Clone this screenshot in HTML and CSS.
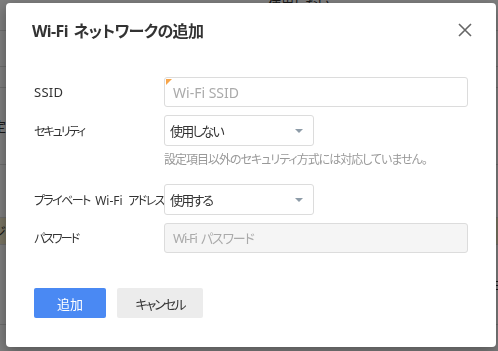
FILE: index.html
```html
<!DOCTYPE html>
<html lang="ja">
    <head>
        <meta charset="UTF-8">
        <title>Wi-Fi ネットワークの追加</title>
        <link rel="stylesheet" href="styles.css">
    </head>
    <body>
        <div class="page">
            <div class="page-row r1"><span class="cell">使用しない</span></div>
            <div class="page-row r2"></div>
            <div class="page-row r3"></div>
            <div class="page-row r4"><span class="cell edge">定</span></div>
            <div class="page-row r5"><span class="cell edge">F</span></div>
            <div class="page-row r6 hl"><span class="cell edge">ジ</span></div>
            <div class="page-row r7"><span class="cell right">E</span></div>
            <div class="page-row r8"></div>
        </div>

        <div class="backdrop"></div>

        <div class="modal">
            <div class="modal-head">
                <div class="modal-title">Wi-Fi ネットワークの追加</div>
                <button class="close" aria-label="閉じる">
                    <svg width="14" height="14" viewBox="0 0 14 14">
                        <path d="M1 1 L13 13 M13 1 L1 13" stroke="#666" stroke-width="1.6" fill="none"/>
                    </svg>
                </button>
            </div>

            <div class="form">
                <div class="form-row">
                    <label class="form-label latin">SSID</label>
                    <div class="field autofill">
                        <input class="input latin" type="text" placeholder="Wi-Fi SSID">
                    </div>
                </div>
                <div class="form-row">
                    <label class="form-label">セキュリティ</label>
                    <div class="select narrow">
                        <span>使用しない</span>
                        <span class="caret"></span>
                    </div>
                </div>
                <div class="hint">設定項目以外のセキュリティ方式には対応していません。</div>
                <div class="form-row">
                    <label class="form-label mixed">プライベート <span class="latin">Wi-Fi</span> アドレス</label>
                    <div class="select narrow">
                        <span>使用する</span>
                        <span class="caret"></span>
                    </div>
                </div>
                <div class="form-row">
                    <label class="form-label">パスワード</label>
                    <div class="field">
                        <input class="input" type="password" placeholder="Wi-Fi パスワード" disabled>
                    </div>
                </div>
            </div>

            <div class="actions">
                <button class="btn primary">追加</button>
                <button class="btn">キャンセル</button>
            </div>
        </div>
    </body>
</html>
```

FILE: styles.css
```css
* {
    box-sizing: border-box;
}

body {
    margin: 0;
    width: 498px;
    height: 351px;
    overflow: hidden;
    font-family: "Noto Sans", "Noto Sans CJK JP", sans-serif;
    font-size: 12px;
    color: #333333;
    background-color: #FFFFFF;
    font-feature-settings: "palt";
}

/* page behind the dialog */

.page {
    width: 100%;
}

.page-row {
    position: relative;
    border-bottom: 1px solid #DDDDDD;
    font-size: 13px;
}
.page-row.r1 { height: 31px; }
.page-row.r2 { height: 36px; }
.page-row.r3 { height: 21px; }
.page-row.r4 { height: 77px; }
.page-row.r5 { height: 53px; }
.page-row.r6 { height: 27px; }
.page-row.r7 { height: 80px; }
.page-row.r8 { height: 30px; }
.page-row.hl {
    background-color: #F4EDC8;
}

.cell {
    display: block;
    padding-left: 268px;
    line-height: 8px;
}
.cell.edge {
    padding: 0;
    margin-left: -7px;
    line-height: 77px;
}
.r5 .cell.edge { line-height: 56px; }
.r6 .cell.edge { line-height: 27px; }
.cell.right {
    padding-left: 492px;
    line-height: 80px;
}

.backdrop {
    position: fixed;
    inset: 0;
    background-color: rgba(0, 0, 0, 0.5);
}

/* dialog */

.modal {
    position: absolute;
    left: 6px;
    top: 3px;
    width: 490px;
    height: 344px;
    padding: 0 28px;
    background-color: #FFFFFF;
    border-radius: 4px;
    box-shadow: 0 4px 14px rgba(0, 0, 0, 0.35);
}

.modal-head {
    display: flex;
    align-items: center;
    justify-content: space-between;
    height: 54px;
}

.modal-title {
    margin-left: -2px;
    font-size: 16px;
    font-weight: bold;
    letter-spacing: -0.6px;
    word-spacing: 2px;
    color: #333333;
}

.close {
    display: flex;
    width: 14px;
    height: 14px;
    margin-right: -4px;
    padding: 0;
    border: 0;
    background: none;
}

.form {
    display: flex;
    flex-direction: column;
    gap: 8px;
    margin-top: 20px;
}

.form-row {
    display: grid;
    grid-template-columns: 130px 1fr;
    align-items: center;
}

.form-label {
    font-size: 12px;
    letter-spacing: -2px;
    color: #333333;
    white-space: nowrap;
}
.form-label.mixed {
    letter-spacing: -1.6px;
    word-spacing: 4px;
}
.latin {
    letter-spacing: 0;
}
.form-label.latin {
    font-size: 13px;
    letter-spacing: 0.3px;
}

.field {
    position: relative;
}
.field.autofill:before {
    content: '';
    position: absolute;
    left: 2px;
    top: 2px;
    border-top: 6px solid #F7A54A;
    border-right: 6px solid transparent;
}

.input {
    display: block;
    width: 100%;
    height: 30px;
    padding: 0 8px;
    border: 1px solid #DCDCDC;
    border-radius: 3px;
    font-family: inherit;
    font-size: 13px;
    letter-spacing: -1.2px;
    word-spacing: 2px;
    color: #333333;
    background-color: #FFFFFF;
    font-feature-settings: "palt";
}
.input.latin {
    font-size: 14px;
    letter-spacing: 0;
    word-spacing: 0;
}
.input::placeholder {
    color: #AAAAAA;
}
.input:disabled {
    background-color: #F5F5F5;
}

.select {
    display: flex;
    align-items: center;
    justify-content: space-between;
    height: 31px;
    padding: 0 10px 0 5px;
    border: 1px solid #DCDCDC;
    border-radius: 3px;
    font-size: 13px;
    letter-spacing: -1.8px;
    color: #333333;
}
.select.narrow {
    width: 150px;
}

.caret {
    width: 0;
    height: 0;
    margin-top: 1px;
    border-left: 4px solid transparent;
    border-right: 4px solid transparent;
    border-top: 4px solid #8E9CA8;
}

.hint {
    margin: -3px 0 7px 130px;
    line-height: 18px;
    font-size: 12px;
    letter-spacing: -1px;
    color: #999999;
}

.actions {
    display: flex;
    gap: 11px;
    margin-top: 35px;
}

.btn {
    height: 30px;
    padding: 0;
    width: 86px;
    border: 0;
    border-radius: 2px;
    font-family: inherit;
    font-size: 13px;
    letter-spacing: -2px;
    color: #333333;
    background-color: #ECECEC;
    font-feature-settings: "palt";
}
.btn.primary {
    width: 72px;
    letter-spacing: 0;
    color: #FFFFFF;
    background-color: #4A89F3;
}
```
